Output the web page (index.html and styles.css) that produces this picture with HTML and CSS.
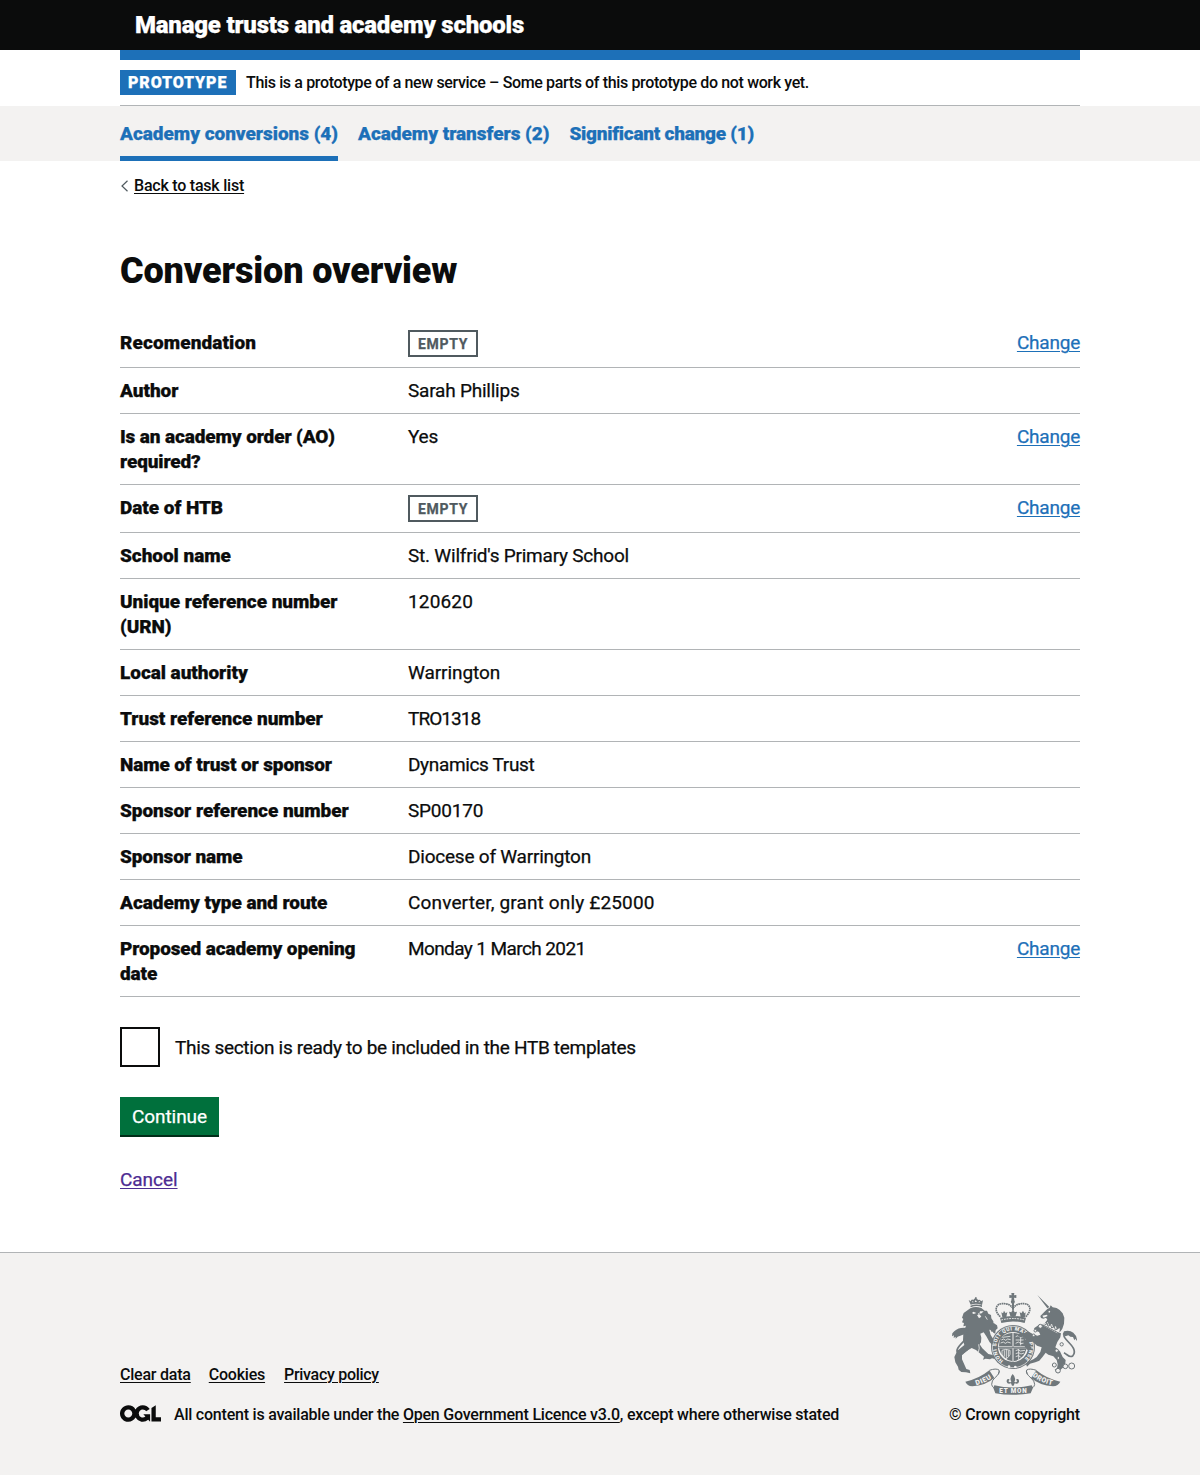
FILE: index.html
```html
<!DOCTYPE html>
<html lang="en">
<head>
<meta charset="utf-8">
<title>Conversion overview – Manage trusts and academy schools</title>
<link rel="stylesheet" href="styles.css">
</head>
<body>
<header class="header">
  <div class="container header-inner"><a class="service-name" href="#">Manage trusts and academy schools</a></div>
</header>

<div class="container">
  <div class="phase-banner">
    <strong class="phase-tag">Prototype</strong>
    <span class="phase-text">This is a prototype of a new service – Some parts of this prototype do not work yet.</span>
  </div>
</div>

<nav class="primary-nav">
  <div class="container nav-list">
    <a class="nav-link nav-link-current" href="#">Academy conversions (4)</a>
    <a class="nav-link" href="#">Academy transfers (2)</a>
    <a class="nav-link nav-link-tight" href="#">Significant change (1)</a>
  </div>
</nav>

<div class="container page">
  <a class="back-link" href="#"><svg class="back-arrow" width="8" height="12" viewBox="0 0 8 12" aria-hidden="true"><path d="M7.500 .8 2 6 7.500 11.200"/></svg><span class="back-text">Back to task list</span></a>

  <main>
    <h1>Conversion overview</h1>

    <dl class="summary">
      <div class="row"><dt class="wide">Recomendation</dt><dd><strong class="tag">Empty</strong></dd><dd class="action"><a href="#">Change</a></dd></div>
      <div class="row"><dt>Author</dt><dd>Sarah Phillips</dd></div>
      <div class="row"><dt class="tight">Is an academy order (AO) required?</dt><dd>Yes</dd><dd class="action"><a href="#">Change</a></dd></div>
      <div class="row"><dt>Date of HTB</dt><dd><strong class="tag">Empty</strong></dd><dd class="action"><a href="#">Change</a></dd></div>
      <div class="row"><dt>School name</dt><dd>St. Wilfrid's Primary School</dd></div>
      <div class="row"><dt>Unique reference number (URN)</dt><dd class="figures">120620</dd></div>
      <div class="row"><dt>Local authority</dt><dd class="place">Warrington</dd></div>
      <div class="row"><dt>Trust reference number</dt><dd class="trust-ref">TRO1318</dd></div>
      <div class="row"><dt class="tight">Name of trust or sponsor</dt><dd class="trust-name">Dynamics Trust</dd></div>
      <div class="row"><dt>Sponsor reference number</dt><dd>SP00170</dd></div>
      <div class="row"><dt class="tight">Sponsor name</dt><dd>Diocese of Warrington</dd></div>
      <div class="row"><dt>Academy type and route</dt><dd class="figures">Converter, grant only £25000</dd></div>
      <div class="row"><dt class="tight">Proposed academy opening date</dt><dd class="date">Monday 1 March 2021</dd><dd class="action"><a href="#">Change</a></dd></div>
    </dl>

    <form>
      <label class="checkbox"><input type="checkbox"><span>This section is ready to be included in the HTB templates</span></label>
      <button class="button" type="button">Continue</button>
      <a class="cancel" href="#">Cancel</a>
    </form>
  </main>
</div>

<footer class="footer">
  <div class="container footer-inner">
    <div class="footer-meta">
      <div class="footer-links"><a href="#">Clear data</a><a href="#">Cookies</a><a class="privacy" href="#">Privacy policy</a></div>
      <div class="licence">
        <svg class="ogl" width="41" height="17" viewBox="0 0 483.2 195.7" role="img" aria-label="Open Government Licence"><path d="M421.5 142.8V.1l-50.7 32.3v161.1h112.4v-50.7zm-122.3-9.6A47.12 47.12 0 0 1 221 97.8c0-26 21.1-47.1 47.1-47.1 16.7 0 31.4 8.7 39.7 21.8l42.7-27.2A97.63 97.63 0 0 0 268.1 0c-36.5 0-68.3 20.1-85.1 49.7A98 98 0 0 0 97.8 0C43.9 0 0 43.9 0 97.8s43.9 97.8 97.8 97.8c36.5 0 68.3-20.1 85.1-49.7a97.76 97.76 0 0 0 149.6 25.4l19.4 22.2h3v-87.8h-80l24.3 27.5zM97.8 145c-26 0-47.1-21.1-47.1-47.1s21.1-47.1 47.1-47.1 47.1 21.1 47.1 47.1S123.8 145 97.8 145"/></svg>
        <span>All content is available under the <a href="#">Open Government Licence v3.0</a>, except where otherwise stated</span>
      </div>
    </div>
    <div class="copyright">
      <svg class="crest" width="125" height="102" viewBox="36 24 375 306" aria-hidden="true">
        <!-- Crown -->
        <g class="fill">
          <path d="M214 24h9l-1 7 7-1v9l-7-1 1 8h-9l1-8-7 1v-9l7 1zM180 98q38-10 78 0l-4 16q-35-9-70 0z"/>
          <circle cx="218.500" cy="50" r="6"/>
          <path d="M187 97l-3-15 5 3 3-8 5 8 5-4-3 15zM211 93l-4-13 7 2 5-10 5 10 7-2-4 13zM242 96l-3-15 5 4 5-8 4 8 4-3-2 15zM216 54h6v20h-6z"/>
        </g>
        <g class="beads"><path d="M181 95C160 77 168 56 186 56C203 55 212 60 216 68M257 95C278 76 270 56 252 56C235 55 226 60 222 68"/></g>
        <path class="pale thin" d="M184 105q35-9 70 0"/>
        <!-- Garter and shield -->
        <circle class="disc" cx="219" cy="186" r="66"/>
        <circle class="inner" cx="219" cy="186" r="45"/>
        <circle class="edge" cx="219" cy="186" r="62"/>
        <path id="garter-line" class="none" d="M190 226.800A50 50 0 1 1 248 226.800"/>
        <text class="motto garter-text"><textPath href="#garter-line" textLength="244">HONI SOIT QUI MAL Y PENSE</textPath></text>
        <g class="fill">
          <path d="M182 160q14-15 34-16v40h-39q0-14 5-24zM222 144q20 0 33 16 5 9 5 24h-38zM177 190h39v38q-30-4-39-38zM222 190h38q-8 34-38 38z"/>
        </g>
        <path class="pale-line" d="M187 157l24-3M184 165l7-3 6 4 6-4 9 2M182 174l8-3 6 4 7-4 9 3M227 155l7-3 7 5 8-2M227 165l24 0M227 175l8-4 8 5 12-3M242 150v31M186 196q11-6 24 0v12q-4 10-13 14-9-6-11-14zM193 196v19M199 194v26M205 196v17M227 197l8-3 6 4 14-2M227 206l9-3 7 4 9-3M227 215l8-3 7 4M236 192v32"/>
        <path class="line thin-line" d="M219 144v86M175 187h88"/>
        <circle class="pale" cx="207" cy="245" r="4"/><circle class="pale" cx="226" cy="246" r="4"/>
        <!-- Lion -->
        <g class="fill">
          <path d="M92 59l-6-14 6 4q2-8 8-4 2-5 7-5 5 0 7 5 7-3 9 4l6-3-3 14q-17-7-34-1zM105 37h5v6h-5zM91 62q17-7 35-1v5q-17-6-34 1z"/>
          <path d="M91 70q15-8 33-1l10 8 7 0 4 9 8 4 1 10 6 9 1 13 6 10-1 14-6-3-6-8-6-1 4 16 9 14-4 16-8-8-10-18-8-12-10 4 3 12-1 14-4 6 8 12 18 17 10 2 8 4 1 9-8-2-6 3-13-2-8 3 3-9-24-20-13-6-15 9-14 13 0 12 9 20 4 9 10 3 2 10-13-3-14-1-8-7-2-9-8-13-3-16 9-19 21-17-4-13 1-23 8-22-8 2 2-10-6-2 4-10-4-4 5-14z"/>
          <path d="M63 129q-15 2-26 16l-1 9 6-3-1 8 6-4 0 6q5-7 14-9 12-2 23-12l1-9q-9-4-22-2z"/>
          <path d="M147 122l14-8 10 7 2 9-9 8-10 2z"/>
        </g>
        <path class="line" d="M80 136C90 146 82 158 70 170C52 188 46 198 55 205C64 211 76 198 84 192"/>
        <path class="pale" d="M100 80l9 4-8 3-5-3zM120 79l11 0-6 6-7 1zM111 90l9-1 4 6-7 5zM96 52l2-4 3 4zM104 51l3-6 4 6zM115 52l3-4 3 4zM116 84l3 6-6-2z"/>
        <path class="pale-line" d="M116 178q4 12-1 23M136 94l6 10"/>
        <!-- Unicorn -->
        <g class="fill">
          <path d="M292 30l36 36-6 4zM322 72l7-4 3-7 6 6q13 0 21 8l9 10 5 13-1 18-5 15-5 8-8 5-44-24 12-16-4-6-8 3-7-2-2-6 11-11z"/>
          <path d="M312 118l46 25 5 2-2 12-9 14-6 16 14 12 8 17 9 9-1 9-5 12-10 9-3 8-9-1-5-8 7-4 2-12-3-13-10-11-15-5-8-6-9 12-10 12-12 5-16 4-9 9-3-8 6-7 16-7 10-7 11-15 4-14-14-5-13-12-10-2-4 10 10 9 0 9-13-2-9-13-3-13 9-5-9-8-8 2-8-5 7-8 14 0 12-4 14 8 12 4 9-3-4-8-11-4-4-7 14-10z"/>
          <path d="M411 168q1-15-11-25-12-9-28-4l-4 9 8 6 9-3 6 4 8 1 4 10 3-5z"/>
        </g>
        <path class="line" d="M376 145C365 151 378 164 388 174C404 190 407 203 398 213C388 219 384 210 372 203"/>
        <g class="pale"><circle cx="328" cy="80" r="2.500"/><path d="M307 92l13-3 3 4-12 5zM308 117l4-7 6 6 5-5 4 10 9-4 3 10 9-3 2 9 10-3-2 11-6 4-40-22z"/></g>
        <path class="line thin-line" d="M309 120l47 24M313 116l4 4 4-6 3 10 8-5 3 10 8-4 3 10 8-4"/>
        <g class="chain"><circle cx="301" cy="124" r="6"/><circle cx="286" cy="137" r="4"/><circle cx="281" cy="151" r="4"/><circle cx="365" cy="178" r="5"/><circle cx="350" cy="197" r="5"/><circle cx="355" cy="219" r="4"/><circle cx="343" cy="240" r="6"/><circle cx="354" cy="257" r="7"/><circle cx="376" cy="244" r="7"/><circle cx="395" cy="243" r="9"/></g>
        <!-- Motto ribbon -->
        <g class="ribbon">
          <path d="M76 290q40-8 72-34l15 23q-27 23-66 25-16-2-21-14z"/>
          <path d="M361 290q-40-8-72-34l-16 23q27 23 66 25 16-2 22-14z"/>
          <path d="M163 301q55 13 112 0l4 7-7 17q-56 9-106 0l-6-16z"/>
        </g>
        <path class="line thin-line" d="M148 256q20-7 29-1 4 10-13 24-9 8-9 19 3 14 13 8M289 256q-20-7-29-1-4 10 13 24 11 9 11 19-3 14-13 8M178 258l-3 10M259 258l3 10"/>
        <path id="dieu-line" class="none" d="M109 301Q137 293 160 276"/>
        <path id="droit-line" class="none" d="M277 273Q306 296 345 302"/>
        <text class="motto"><textPath href="#dieu-line" textLength="51">DIEU</textPath></text>
        <text class="motto"><textPath href="#droit-line" textLength="66">DROIT</textPath></text>
        <text class="motto et-mon" x="178" y="324" textLength="82">ET MON</text>
        <path class="fill" d="M218 267q-11 12-4 23-5 4-9-2 4-1 3-5-9-3-8 7 2 9 13 5l3 7h5l3-7q11 4 13-5 1-10-8-7-1 4 3 5-4 6-9 2 7-11-5-23z"/>
      </svg>
      <span class="crown-text">© Crown copyright</span>
    </div>
  </div>
</footer>
</body>
</html>
```
FILE: styles.css
```css
* { box-sizing: border-box; }
body {
  margin: 0;
  display: flex;
  flex-direction: column;
  min-height: 1475px;
  background: #fff;
  color: #0b0c0c;
  font: 400 19px/25px Roboto, Arial, sans-serif;
  letter-spacing: -.22px;
  -webkit-text-stroke: .25px currentColor;
}
a { color: #1d70b8; text-decoration: underline; text-decoration-thickness: 1px; text-underline-offset: 2px; }
.container { width: 960px; margin: 0 auto; }

.header { height: 50px; background: #0b0c0c; }
.header-inner { height: 60px; padding: 10px 15px 0; border-bottom: 10px solid #1d70b8; }
.service-name { display: block; color: #fff; font-size: 24px; font-weight: 900; line-height: 30px; letter-spacing: -.22px; text-decoration: none; }

.phase-banner { display: flex; align-items: center; gap: 10px; height: 56px; padding-top: 10px; border-bottom: 1px solid #b1b4b6; font-size: 16px; }
.phase-tag { width: 116px; height: 25px; padding-left: 8px; background: #1d70b8; color: #fff; font-weight: 900; letter-spacing: .9px; text-transform: uppercase; line-height: 25px; }
.phase-text { font-weight: 500; letter-spacing: -.36px; -webkit-text-stroke: 0; }

.primary-nav { background: #f3f2f1; }
.nav-list { display: flex; gap: 20px; }
.nav-link { height: 55px; padding-top: 15px; font-weight: 900; letter-spacing: -.03px; text-decoration: none; white-space: nowrap; }
.nav-link-current { width: 218px; border-bottom: 5px solid #1d70b8; }
.nav-link-tight { letter-spacing: -.24px; }

.page { flex: 1; }
.back-link { display: flex; align-items: center; gap: 6px; margin-top: 15px; height: 20px; color: #0b0c0c; font-size: 16px; font-weight: 500; line-height: 20px; text-decoration: none; -webkit-text-stroke: 0; }
.back-text { text-decoration: underline; text-decoration-thickness: 1px; text-underline-offset: 2px; }
.back-arrow { fill: none; stroke: #505a5f; stroke-width: 1.2; }

h1 { margin: 56px 0 29px; font-size: 36px; line-height: 39px; font-weight: 900; letter-spacing: -.13px; -webkit-text-stroke: 0; }

.summary { margin: 0 0 30px; }
.row { display: grid; grid-template-columns: 3fr 5fr 2fr; padding: 10px 0; border-bottom: 1px solid #b1b4b6; }
dt { padding-right: 20px; font-weight: 900; letter-spacing: -.05px; }
dd { margin: 0; }
.tight { letter-spacing: -.12px; }
.wide { letter-spacing: .1px; }
.action { text-align: right; }
.figures { letter-spacing: .15px; }
.date { letter-spacing: -.6px; }
.place { letter-spacing: -.07px; }
.trust-ref { letter-spacing: -.95px; }
.trust-name { letter-spacing: -.35px; }
.tag { display: block; width: 70px; height: 27px; padding-left: 8px; border: 2px solid #505a5f; color: #505a5f; font-size: 14px; line-height: 24px; letter-spacing: .7px; text-transform: uppercase; }

.checkbox { display: flex; align-items: center; gap: 15px; letter-spacing: -.31px; }
.checkbox input { appearance: none; width: 40px; height: 40px; margin: 0; border: 2px solid #0b0c0c; background: #fff; }
.button { display: block; width: 99px; height: 38px; margin: 30px 0 32px; padding: 0; border: 0; background: #00703c; box-shadow: 0 2px 0 #002d18; color: #fff; font: inherit; letter-spacing: -.08px; }
.cancel { color: #4c2c92; letter-spacing: -.05px; }

.footer { height: 223px; border-top: 1px solid #b1b4b6; background: #f3f2f1; font-size: 16px; font-weight: 500; line-height: 20px; -webkit-text-stroke: 0; }
.footer a { color: #0b0c0c; }
.footer-inner { display: flex; justify-content: space-between; align-items: flex-end; padding-top: 40px; }
.footer-links { display: flex; gap: 18px; margin-bottom: 20px; }
.footer-links .privacy { margin-left: 1px; letter-spacing: -.3px; }
.licence { display: flex; align-items: center; gap: 13px; }
.ogl { fill: #0b0c0c; margin-bottom: 3px; }
.copyright { display: flex; flex-direction: column; align-items: flex-end; gap: 10px; }
.crown-text { letter-spacing: -.15px; }
.crest { margin-right: 3px; }

.fill, .ribbon, .disc { fill: #6f777b; }
.pale, .inner { fill: #f3f2f1; }
.pale.thin { fill: none; stroke: #f3f2f1; stroke-width: 3; stroke-dasharray: 5 3; }
.pale-line { fill: none; stroke: #f3f2f1; stroke-width: 2.4; }
.line { fill: none; stroke: #6f777b; stroke-width: 5; }
.line.thin-line { stroke-width: 3; }
.beads { fill: none; stroke: #6f777b; stroke-width: 5; stroke-dasharray: 5 1.5; }
.chain { fill: #f3f2f1; stroke: #6f777b; stroke-width: 3; }
.edge { fill: none; stroke: #f3f2f1; stroke-width: 2; }
.none { fill: none; }
.motto { fill: #f3f2f1; font-size: 21px; font-weight: 900; letter-spacing: 0; }
.garter-text { font-size: 15px; }
.et-mon { font-size: 19px; }
```
